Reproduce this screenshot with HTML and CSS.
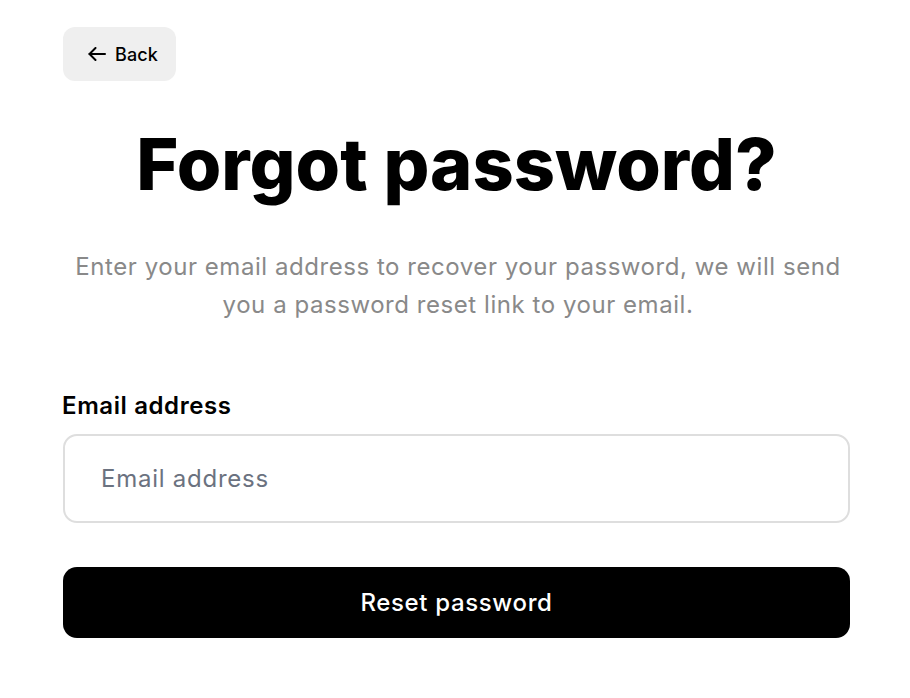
FILE: index.html
```html
<!DOCTYPE html>
<html lang="en">
<head>
<meta charset="utf-8">
<title>Forgot password</title>
<link rel="stylesheet" href="styles.css">
</head>
<body>
<main class="page">
  <a class="back" href="#">
    <svg class="back-icon" viewBox="0 0 18 14" width="18" height="14" fill="none" stroke="currentColor" stroke-width="2" stroke-linecap="round" stroke-linejoin="round"><path d="M17 7H1.5"/><path d="M7.5 1L1.5 7l6 6"/></svg>
    <span>Back</span>
  </a>
  <h1 class="title">Forgot password?</h1>
  <p class="subtitle">Enter your email address to recover your password, we will send you a password reset link to your email.</p>
  <form class="form">
    <label class="label" for="email">Email address</label>
    <input class="input" id="email" type="email" placeholder="Email address">
    <button class="submit" type="button">Reset password</button>
  </form>
</main>
</body>
</html>
```
FILE: styles.css
```css
* { box-sizing: border-box; }
html, body { margin: 0; padding: 0; background: #fff; }
body { font-family: Inter, "Noto Sans", sans-serif; color: #000; }
.page {
  width: 787px;
  margin-left: 63px;
  padding-top: 27px;
  display: flex;
  flex-direction: column;
}
.back {
  align-self: flex-start;
  display: flex;
  align-items: center;
  gap: 9px;
  height: 54px;
  padding: 0 18px 0 25px;
  background: #efefef;
  border-radius: 12px;
  color: #000;
  text-decoration: none;
  font-size: 18px;
  font-weight: 500;
  letter-spacing: 0.1px;
}
.back-icon { display: block; }
.title {
  margin: 40px 0 0;
  text-align: center;
  font-size: 72px;
  font-weight: 800;
  line-height: 1.2;
  letter-spacing: 0;
}
.subtitle {
  margin: 41px auto 0;
  width: 790px;
  text-align: center;
  font-size: 24px;
  line-height: 38px;
  letter-spacing: 0.55px;
  color: #898989;
}
.form {
  margin-top: 67px;
  display: flex;
  flex-direction: column;
}
.label {
  font-size: 24px;
  font-weight: 600;
  letter-spacing: 0.6px;
  margin-left: -1px;
  line-height: 30px;
}
.input {
  margin-top: 13px;
  height: 89px;
  border: 2px solid #dedede;
  border-radius: 14px;
  padding: 0 36px;
  font-family: inherit;
  font-size: 24px;
  letter-spacing: 0.75px;
  color: #000;
  outline: none;
}
.input::placeholder { color: #6b7280; }
.submit {
  margin-top: 44px;
  height: 71px;
  border: none;
  border-radius: 14px;
  background: #000;
  color: #fff;
  font-family: inherit;
  font-size: 24px;
  font-weight: 500;
  letter-spacing: 0.65px;
  cursor: pointer;
}
```
